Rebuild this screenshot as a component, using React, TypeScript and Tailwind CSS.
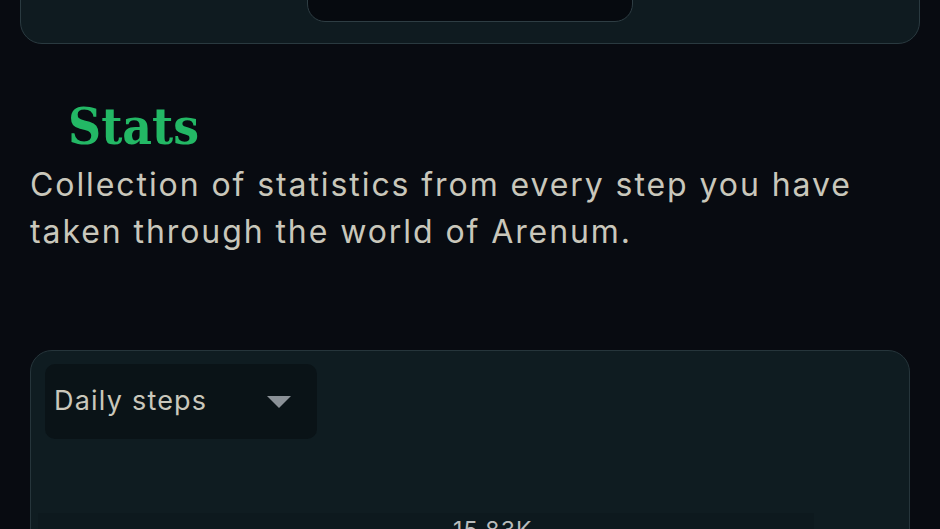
const App = () => {
  return (
    <div className="h-[529px] overflow-hidden bg-[#080b11]">
      {/* Top card (scrolled past) */}
      <div className="mx-[20px] -mt-[76px] h-[120px] rounded-[22px] border-[1.5px] border-[#2a3a40] bg-[#0f1b20] flex items-end justify-center pb-[21px]">
        <div className="w-[326px] h-[60px] rounded-[18px] border-[1.5px] border-[#2e3d43] bg-[#060a0f]" />
      </div>

      {/* Stats heading */}
      <section className="px-[30px] pt-[52px]">
        <h1
          className="ml-[38px] text-[51px] leading-[60px] font-bold text-[#23b865]"
          style={{ fontFamily: '"DejaVu Serif", serif', fontStretch: "condensed" }}
        >
          Stats
        </h1>
        <p
          className="mt-[5px] max-w-[870px] text-[32px] leading-[47px] tracking-[0.06em] text-[#c9c7bb]"
          style={{ fontFamily: "Inter, sans-serif" }}
        >
          Collection of statistics from every step you have taken through the world of Arenum.
        </p>
      </section>

      {/* Chart card */}
      <div className="mx-[30px] mt-[95px] h-[260px] rounded-[22px] border-[1.5px] border-[#26353b] bg-[#0f1c21] px-[14px] pt-[13px]">
        <div className="w-[272px] h-[75px] rounded-[10px] bg-[#0a1317] flex items-center justify-between pl-[9px] pr-[26px]">
          <span
            className="text-[27px] tracking-[0.045em] text-[#c9c7bb]"
            style={{ fontFamily: "Inter, sans-serif" }}
          >
            Daily steps
          </span>
          <svg width="24" height="12" viewBox="0 0 24 12">
            <path d="M0 0 L24 0 L12 12 Z" fill="#8b9197" />
          </svg>
        </div>
        <div className="mt-[76px] -ml-[7px] w-[776px] h-[100px] bg-[#0d191e] pl-[415px]">
          <span
            className="block -mt-[2px] text-[23px] tracking-[0.05em] text-[#b9bcbc]"
            style={{ fontFamily: "Inter, sans-serif" }}
          >
            15.83K
          </span>
        </div>
      </div>
    </div>
  );
};

export default App;
